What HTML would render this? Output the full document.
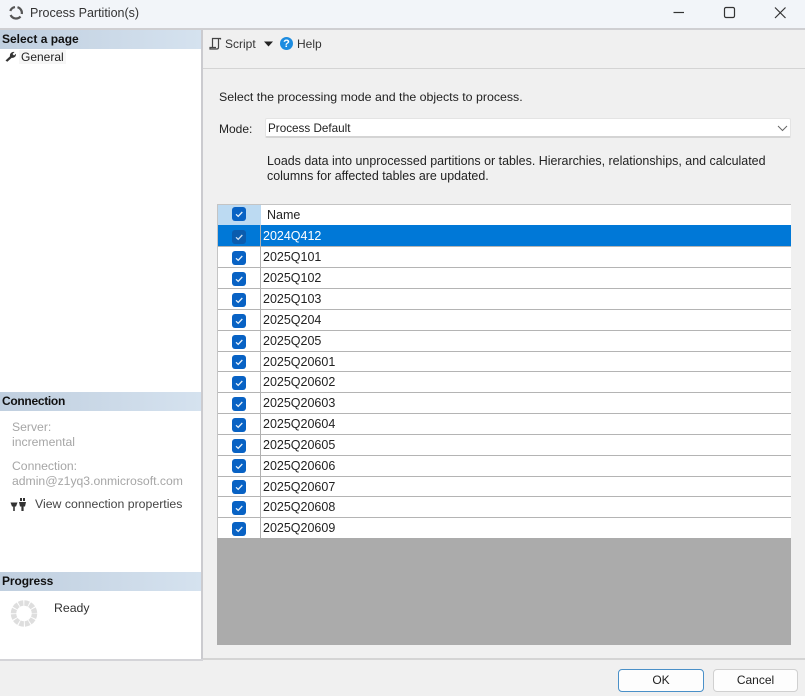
<!DOCTYPE html>
<html><head><meta charset="utf-8">
<style>
html,body{margin:0;padding:0;width:805px;height:696px;overflow:hidden;background:#f0f0f0;font-family:"Liberation Sans",sans-serif;color:#1a1a1a;font-size:12px}
.a{position:absolute;white-space:nowrap;line-height:14px}
.band{position:absolute;left:0;width:201px;height:19px;background:linear-gradient(90deg,#c0cfdf,#d5e2ef);font-weight:bold;font-size:12px;line-height:19px;padding-left:2px;box-sizing:border-box;color:#111}
.row{position:absolute;left:218px;width:573px;background:#fff;border-bottom:1px solid #b4b4b4;box-sizing:border-box}
.row span{position:absolute;left:45px;top:3px;line-height:14px;font-size:12.5px;color:#222}
.cb{position:absolute;left:232px;width:14px;height:14px;background:#0862c4;border-radius:3px}
.cb svg{position:absolute;left:0;top:0}
.g{color:#a6a6a6}
</style></head><body>
<div style="position:absolute;left:0;top:0;width:805px;height:28px;background:#f2f5f9"></div>
<div style="position:absolute;left:0;top:28px;width:805px;height:2px;background:#cfcfd2"></div>
<svg class="a" style="left:8px;top:5px" width="16" height="16" viewBox="0 0 16 16" fill="none" stroke="#555" stroke-width="2.2"><path d="M2.300 6A6 6 0 0 1 7 2.100"/><path d="M9.500 2.200A6 6 0 0 1 13.800 9"/><path d="M12.500 11.500A6 6 0 0 1 2.600 10"/></svg>
<div class="a" style="left:30px;top:6px;font-size:12.5px;color:#333">Process Partition(s)</div>
<svg class="a" style="left:670px;top:4px" width="130" height="18" viewBox="0 0 130 18" fill="none" stroke="#333" stroke-width="1.2"><path d="M3.500 8.500H14"/><rect x="54.500" y="3.500" width="10" height="10" rx="1.500"/><path d="M105 3.500L115.500 14M115.500 3.500L105 14"/></svg>

<div style="position:absolute;left:0;top:30px;width:201px;height:629px;background:#fff"></div>
<div style="position:absolute;left:201px;top:30px;width:2px;height:630px;background:#cbcbcf"></div>
<div style="position:absolute;left:0;top:659px;width:203px;height:2px;background:#d4d4d8"></div>
<div style="position:absolute;left:203px;top:658px;width:602px;height:2px;background:#d4d4d4"></div>
<div style="position:absolute;left:203px;top:68px;width:602px;height:1px;background:#d4d4d4"></div>

<div class="band" style="top:30px">Select a page</div>
<svg class="a" style="left:5px;top:51px" width="12" height="11" viewBox="0 0 12 11"><path d="M0.500 9.500L5 5.200C4.500 3 6.500 0.500 9.500 1L7.500 3L9 4.500L11 2.800C11.300 5.500 9 7.300 6.800 6.800L2.300 10.800Z" fill="#333"/></svg>
<div class="a" style="left:19px;top:50px;height:14px;padding:0 2px;background:#f6f6f6;color:#222">General</div>

<svg class="a" style="left:209px;top:37px" width="13" height="13" viewBox="0 0 13 13" fill="none" stroke="#444" stroke-width="1.200"><path d="M3.500 10.500V1.500H11.500V2.500M9.500 2V10.500C9.500 11.500 8.500 12 7.500 12H1V10.500H7"/></svg>
<div class="a" style="left:225px;top:37px;color:#333">Script</div>
<svg class="a" style="left:264px;top:41px" width="9" height="6"><path d="M0 0.500H9L4.500 5.500Z" fill="#222"/></svg>
<div class="a" style="left:280px;top:37px;width:13px;height:13px;border-radius:50%;background:#1c8ce0;color:#fff;font-weight:bold;font-size:11px;text-align:center;line-height:14px">?</div>
<div class="a" style="left:297px;top:37px;color:#333">Help</div>

<div class="a" style="left:219px;top:90px;color:#222;font-size:12.37px">Select the processing mode and the objects to process.</div>
<div class="a" style="left:219px;top:122px;color:#222">Mode:</div>
<div style="position:absolute;left:265px;top:118px;width:526px;height:20px;background:#fff;border:1px solid #e4e4e4;border-bottom:2px solid #d4d4d4;box-sizing:border-box;border-radius:2px"></div>
<div class="a" style="left:268px;top:122px;color:#222;font-size:11.7px">Process Default</div>
<svg class="a" style="left:777px;top:125px" width="11" height="7" fill="none" stroke="#666"><path d="M1 1L5.500 5.500L10 1"/></svg>
<div class="a" style="left:267px;top:154px;color:#222;line-height:15px;font-size:12.45px">Loads data into unprocessed partitions or tables. Hierarchies, relationships, and calculated<br>columns for affected tables are updated.</div>

<div style="position:absolute;left:217px;top:204px;width:574px;height:441px;background:#ababab"></div>
<div style="position:absolute;left:217px;top:204px;width:574px;height:1px;background:#c4c4c4"></div>
<div style="position:absolute;left:217px;top:204px;width:1px;height:334px;background:#c4c4c4"></div>
<div style="position:absolute;left:218px;top:205px;width:573px;height:20px;background:#fff"></div>
<div style="position:absolute;left:218px;top:205px;width:43px;height:20px;background:#bcdaf2"></div>
<div class="a" style="left:267px;top:208px;font-size:12.5px;color:#222">Name</div>

<div class="row" style="top:225px;height:21px;background:#0078d7;border-bottom:none"><span style="color:#fff;top:4px">2024Q412</span></div>
<div class="row" style="top:247px;height:21px;"><span>2025Q101</span></div>
<div class="row" style="top:268px;height:21px"><span>2025Q102</span></div>
<div class="row" style="top:289px;height:21px"><span>2025Q103</span></div>
<div class="row" style="top:310px;height:21px"><span>2025Q204</span></div>
<div class="row" style="top:331px;height:21px"><span>2025Q205</span></div>
<div class="row" style="top:352px;height:20px"><span>2025Q20601</span></div>
<div class="row" style="top:372px;height:21px"><span>2025Q20602</span></div>
<div class="row" style="top:393px;height:21px"><span>2025Q20603</span></div>
<div class="row" style="top:414px;height:21px"><span>2025Q20604</span></div>
<div class="row" style="top:435px;height:21px"><span>2025Q20605</span></div>
<div class="row" style="top:456px;height:21px"><span>2025Q20606</span></div>
<div class="row" style="top:477px;height:20px"><span>2025Q20607</span></div>
<div class="row" style="top:497px;height:21px"><span>2025Q20608</span></div>
<div class="row" style="top:518px;height:20px;border-bottom:none"><span>2025Q20609</span></div>
<div style="position:absolute;left:218px;top:246px;width:573px;height:1px;background:#b4b4b4"></div>
<div style="position:absolute;left:260px;top:225px;width:1px;height:313px;background:#b0b0b0"></div>

<div class="cb" style="top:207px"><svg width="14" height="14" fill="none" stroke="#e8f2fb" stroke-width="1.300"><path d="M4 7.300L6.200 9.300L10.300 5"/></svg></div>
<div class="cb" style="top:230px;background:#0a5cae"><svg width="14" height="14" fill="none" stroke="#cfe2f5" stroke-width="1.300"><path d="M4 7.300L6.200 9.300L10.300 5"/></svg></div>
<div class="cb" style="top:251px"><svg width="14" height="14" fill="none" stroke="#e8f2fb" stroke-width="1.300"><path d="M4 7.300L6.200 9.300L10.300 5"/></svg></div>
<div class="cb" style="top:272px"><svg width="14" height="14" fill="none" stroke="#e8f2fb" stroke-width="1.300"><path d="M4 7.300L6.200 9.300L10.300 5"/></svg></div>
<div class="cb" style="top:293px"><svg width="14" height="14" fill="none" stroke="#e8f2fb" stroke-width="1.300"><path d="M4 7.300L6.200 9.300L10.300 5"/></svg></div>
<div class="cb" style="top:314px"><svg width="14" height="14" fill="none" stroke="#e8f2fb" stroke-width="1.300"><path d="M4 7.300L6.200 9.300L10.300 5"/></svg></div>
<div class="cb" style="top:335px"><svg width="14" height="14" fill="none" stroke="#e8f2fb" stroke-width="1.300"><path d="M4 7.300L6.200 9.300L10.300 5"/></svg></div>
<div class="cb" style="top:355px"><svg width="14" height="14" fill="none" stroke="#e8f2fb" stroke-width="1.300"><path d="M4 7.300L6.200 9.300L10.300 5"/></svg></div>
<div class="cb" style="top:376px"><svg width="14" height="14" fill="none" stroke="#e8f2fb" stroke-width="1.300"><path d="M4 7.300L6.200 9.300L10.300 5"/></svg></div>
<div class="cb" style="top:397px"><svg width="14" height="14" fill="none" stroke="#e8f2fb" stroke-width="1.300"><path d="M4 7.300L6.200 9.300L10.300 5"/></svg></div>
<div class="cb" style="top:418px"><svg width="14" height="14" fill="none" stroke="#e8f2fb" stroke-width="1.300"><path d="M4 7.300L6.200 9.300L10.300 5"/></svg></div>
<div class="cb" style="top:439px"><svg width="14" height="14" fill="none" stroke="#e8f2fb" stroke-width="1.300"><path d="M4 7.300L6.200 9.300L10.300 5"/></svg></div>
<div class="cb" style="top:459px"><svg width="14" height="14" fill="none" stroke="#e8f2fb" stroke-width="1.300"><path d="M4 7.300L6.200 9.300L10.300 5"/></svg></div>
<div class="cb" style="top:480px"><svg width="14" height="14" fill="none" stroke="#e8f2fb" stroke-width="1.300"><path d="M4 7.300L6.200 9.300L10.300 5"/></svg></div>
<div class="cb" style="top:501px"><svg width="14" height="14" fill="none" stroke="#e8f2fb" stroke-width="1.300"><path d="M4 7.300L6.200 9.300L10.300 5"/></svg></div>
<div class="cb" style="top:522px"><svg width="14" height="14" fill="none" stroke="#e8f2fb" stroke-width="1.300"><path d="M4 7.300L6.200 9.300L10.300 5"/></svg></div>

<div class="band" style="top:392px;letter-spacing:-0.3px">Connection</div>
<div class="a g" style="left:12px;top:420px;font-size:12.2px">Server:</div>
<div class="a g" style="left:12px;top:435px;font-size:12.2px">incremental</div>
<div class="a g" style="left:12px;top:459px;font-size:12.2px">Connection:</div>
<div class="a g" style="left:12px;top:474px;font-size:12.2px">admin@z1yq3.onmicrosoft.com</div>
<svg class="a" style="left:10px;top:497px" width="17" height="15" viewBox="0 0 17 15" fill="#333"><path d="M0.500 5.500H7.500L6 9.500H4.800V14H3.200V9.500H2Z"/><path d="M9 5H16L15 9.500H13.600V14H11.400V9.500H10Z"/><rect x="10" y="1" width="2" height="3"/><rect x="13" y="1" width="2" height="3"/></svg>
<div class="a" style="left:35px;top:497px;color:#444;font-size:12.3px">View connection properties</div>

<div class="band" style="top:572px;letter-spacing:-0.1px">Progress</div>
<svg class="a" style="left:10px;top:600px" width="28" height="28" viewBox="0 0 28 28" fill="none" stroke="#dedede" stroke-width="5.500"><circle cx="14" cy="13.500" r="10.500" stroke-dasharray="4.500 1"/></svg>
<div class="a" style="left:54px;top:601px;color:#333;font-size:12.3px">Ready</div>

<div class="a" style="left:618px;top:669px;width:86px;height:23px;box-sizing:border-box;background:#fdfdfd;border:1.500px solid #4a90c8;border-radius:4px;text-align:center;line-height:20px;color:#222">OK</div>
<div class="a" style="left:713px;top:669px;width:85px;height:23px;box-sizing:border-box;background:#fdfdfd;border:1px solid #d0d0d0;border-radius:4px;text-align:center;line-height:21px;color:#222">Cancel</div>
</body></html>
